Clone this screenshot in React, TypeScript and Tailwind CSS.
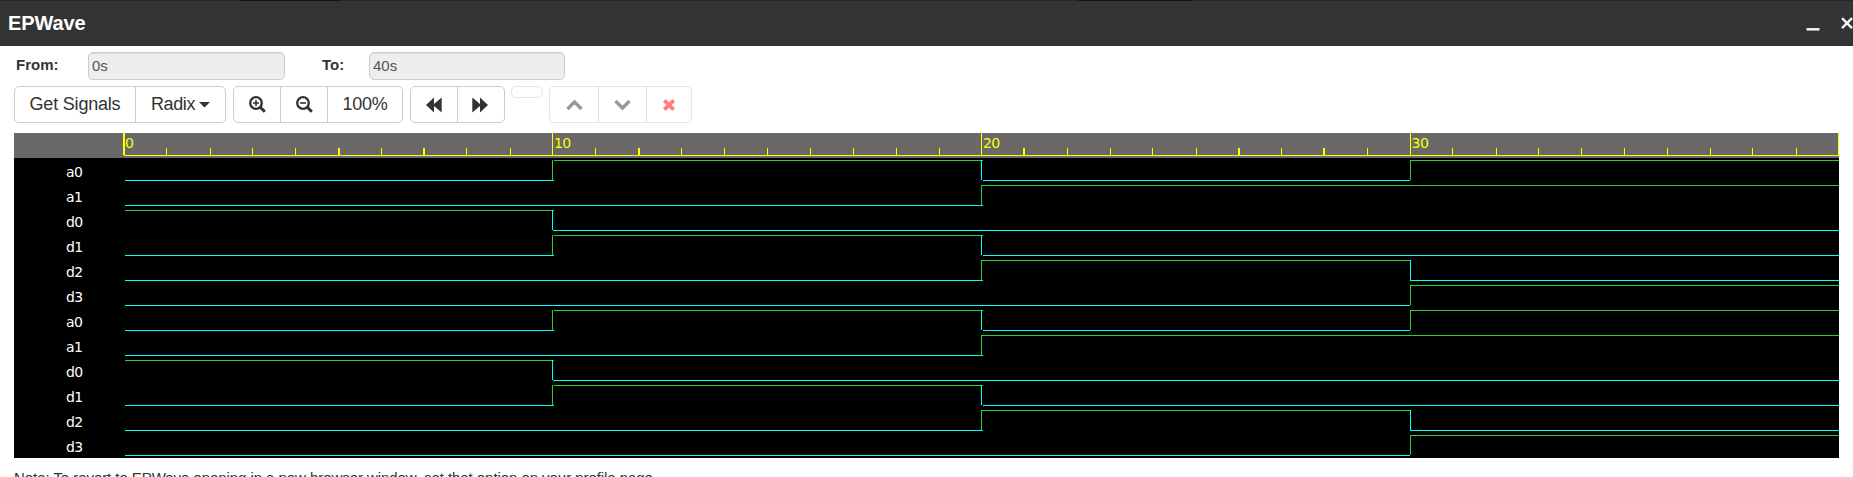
import React from "react";

const WIDE = new Set([338, 423, 638, 1023, 1238, 1323]);
const MINOR = [
  166, 210, 252, 295, 338, 381, 423, 466, 510,
  595, 638, 681, 724, 767, 810, 853, 896, 939,
  1023, 1067, 1110, 1152, 1196, 1238, 1281, 1323, 1367,
  1452, 1496, 1538, 1581, 1624, 1667, 1710, 1752, 1796,
];
const edges = [125, 552, 981, 1410, 1839];
const labels: [number, number][] = [[0, 111], [10, 540], [20, 969], [30, 1397.6]];
const signals: [string, string][] = [
  ["a0", "0101"], ["a1", "0011"], ["d0", "1000"], ["d1", "0100"], ["d2", "0010"], ["d3", "0001"],
  ["a0", "0101"], ["a1", "0011"], ["d0", "1000"], ["d1", "0100"], ["d2", "0010"], ["d3", "0001"],
];

function Wave({ bits, row }: { bits: string; row: number }) {
  const top = row * 25;
  return (
    <g>
      {bits.split("").map((b, i) => {
        const high = b === "1";
        const color = high ? "#32cd32" : "#00ffff";
        const changed = i > 0 && bits[i - 1] !== b;
        const x = edges[i] - 14;
        const next = edges[i + 1] - 14;
        let start = x;
        if (changed && i === 1) start = high ? x + 2 : x + 1;
        if (changed && i === 2 && !high) start = x + 2;
        const end = i < 2 && bits[i + 1] !== b ? next + 2 : next;
        return (
          <g key={i} fill={color}>
            {changed && <rect x={x} y={top + 2} width={1} height={20} />}
            <rect x={start} y={top + (high ? 2 : 22)} width={end - start} height={1} />
          </g>
        );
      })}
    </g>
  );
}

function Ruler() {
  return (
    <svg width={1825} height={25} className="block bg-[#696969]" shapeRendering="crispEdges">
      <g fill="#ffff00">
        <rect x={110} y={22} width={1715} height={1} />
        <rect x={109} y={0} width={2} height={22} />
        <rect x={1824} y={0} width={1} height={23} />
        {edges.slice(1, 4).map((x) => <rect key={x} x={x - 14} y={0} width={1} height={22} />)}
        {MINOR.map((x) => <rect key={x} x={x - 14} y={15} width={WIDE.has(x) ? 2 : 1} height={7} />)}
        {labels.map(([n, x]) => (
          <text key={n} x={x} y={15} fontSize={14} letterSpacing={-0.6} fontFamily="'DejaVu Sans', sans-serif">{n}</text>
        ))}
      </g>
    </svg>
  );
}

function Group({ children, className = "border-[#ccc] divide-[#ccc]" }: { children: React.ReactNode; className?: string }) {
  return <div className={`flex h-[37px] shrink-0 divide-x rounded-[5px] border text-[18px] tracking-[-0.2px] text-[#333] ${className}`}>{children}</div>;
}
const cell = "flex shrink-0 items-center justify-center";

function Zoom({ plus }: { plus?: boolean }) {
  return (
    <svg width="17" height="17" viewBox="0 0 17 17" fill="none" stroke="#333">
      <circle cx="7" cy="7" r="5.8" strokeWidth="2.3" />
      <path d="M11.3 11.3l4.5 4.5" strokeWidth="3" />
      <path d={plus ? "M4 7h6M7 4v6" : "M4 7h6"} strokeWidth="1.6" />
    </svg>
  );
}
function Double({ flip }: { flip?: boolean }) {
  return (
    <svg width="16" height="16" viewBox="0 0 16 16" fill="#333" className={flip ? "-scale-x-100" : ""}>
      <path d="M0 8L8 0.5V7L15.7 0.5V15.5L8 9V15.5Z" />
    </svg>
  );
}

export default function App() {
  return (
    <div className="h-[477px] overflow-hidden bg-white font-['Liberation_Sans',Arial,sans-serif] text-[#333]">
      <header className="flex h-[46px] flex-col bg-[#333]">
        <div className="flex h-px bg-[#262626]">
          <div className="ml-[240px] h-px w-[99px] bg-[#0d1027]" />
          <div className="ml-[739px] h-px w-[114px] bg-[#0d1027]" />
        </div>
        <div className="flex h-[45px] items-center justify-between pl-2">
          <h1 className="pb-[2px] text-[20px] font-bold tracking-[-0.1px] text-white">EPWave</h1>
          <svg width="48" height="31" viewBox="0 0 48 31" fill="none" stroke="#f4f4f4">
            <path d="M1.5 21.3h13" strokeWidth="2.5" />
            <path d="M37 10.2l10 10M47 10.2l-10 10" strokeWidth="2.4" />
          </svg>
        </div>
      </header>
      <div className="flex h-10 items-start pl-4 pt-[6px] text-[15px]">
        <label className="w-[72px] pt-[4px] font-bold leading-[18px]">From:</label>
        <div className="h-7 w-[197px] rounded-[5px] border border-[#ccc] bg-[#eee] pl-[3px] leading-[26px] text-[#555] shadow-[inset_0_1px_1px_rgba(0,0,0,0.075)]">0s</div>
        <label className="ml-[37px] w-[47px] pt-[4px] font-bold leading-[18px]">To:</label>
        <div className="h-7 w-[196px] rounded-[5px] border border-[#ccc] bg-[#eee] pl-[3px] leading-[26px] text-[#555] shadow-[inset_0_1px_1px_rgba(0,0,0,0.075)]">40s</div>
      </div>
      <div className="flex h-[47px] items-start pl-[14px]">
        <Group>
          <div className={`${cell} w-[121px]`}>Get Signals</div>
          <div className={`${cell} w-[89px] gap-1 tracking-[-0.4px]`}>Radix<svg width="11" height="6" viewBox="0 0 11 6"><path d="M0 0h11L5.5 5.5z" fill="#333" /></svg></div>
        </Group>
        <Group className="ml-[7px] border-[#ccc] divide-[#ccc]">
          <div className={`${cell} w-[47px]`}><Zoom plus /></div>
          <div className={`${cell} w-[47px]`}><Zoom /></div>
          <div className={`${cell} w-[74px]`}>100%</div>
        </Group>
        <Group className="ml-[7px] border-[#ccc] divide-[#ccc]">
          <div className={`${cell} w-[47px]`}><Double /></div>
          <div className={`${cell} w-[46px] pr-[2px]`}><Double flip /></div>
        </Group>
        <div className="ml-[6px] h-3 w-8 rounded-[5px] border border-[#e5e5e5]" />
        <Group className="ml-[6px] border-[#e5e5e5] divide-[#dcdcdc]">
          <div className={`${cell} w-[49px]`}><svg width="17" height="13" viewBox="0 0 17 13" fill="none" stroke="#999" strokeWidth="3.4"><path d="M1.5 11L8.5 4l7 7" /></svg></div>
          <div className={`${cell} w-[48px]`}><svg width="17" height="13" viewBox="0 0 17 13" fill="none" stroke="#999" strokeWidth="3.4"><path d="M1.5 3l7 7 7-7" /></svg></div>
          <div className={`${cell} w-[44px]`}><svg width="14" height="14" viewBox="0 0 14 14" fill="none" stroke="#ff8080" strokeWidth="4"><path d="M2.3 2.3l9.4 9.4M11.7 2.3l-9.4 9.4" /></svg></div>
        </Group>
      </div>
      <main className="ml-[14px] w-[1825px]">
        <Ruler />
        <svg width={1825} height={300} className="block bg-black" shapeRendering="crispEdges">
          {signals.map(([name, bits], i) => (
            <g key={i}>
              <text x={52} y={i * 25 + 19} fill="#fff" fontSize={14} letterSpacing={-0.6} fontFamily="'DejaVu Sans', sans-serif">{name}</text>
              <Wave bits={bits} row={i} />
            </g>
          ))}
        </svg>
      </main>
      <p className="ml-[14px] mt-[9px] whitespace-nowrap text-[15px] leading-[21px] tracking-[-0.06px]">Note: To revert to EPWave opening in a new browser window, set that option on your profile page.</p>
    </div>
  );
}
